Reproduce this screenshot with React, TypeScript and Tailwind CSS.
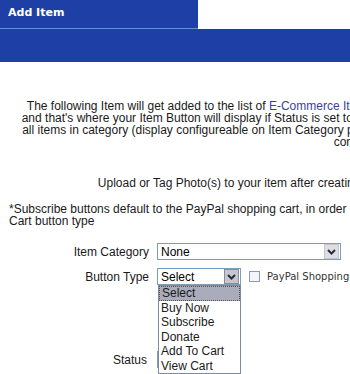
import * as React from 'react';

const arial = { fontFamily: '"Liberation Sans", Arial, sans-serif' };
const verdana = { fontFamily: '"DejaVu Sans", Verdana, sans-serif' };

const buttonTypes = ['Select', 'Buy Now', 'Subscribe', 'Donate', 'Add To Cart', 'View Cart'];

const Arrow: React.FC<{ open?: boolean }> = ({ open }) => (
  <div
    className={`flex items-center justify-center w-[15px] h-[15px] border ${
      open ? 'bg-[#c4c6d0] border-[#8a8e9c]' : 'bg-[#dcdee6] border-[#c2c6d4]'
    }`}
  >
    <svg width="9" height="6" viewBox="0 0 9 6">
      <path d="M1 1 L4.5 4.5 L8 1" fill="none" stroke="#2a2a3a" strokeWidth="2" />
    </svg>
  </div>
);

const FakeSelect: React.FC<{ value: string; width: string; open?: boolean }> = ({ value, width, open }) => (
  <div className={`flex items-center justify-between h-[17px] border border-[#7f9db9] bg-white pl-[3px] pr-px shrink-0 ${width}`}>
    <span className="text-[12px] leading-none text-black">{value}</span>
    <Arrow open={open} />
  </div>
);

const App: React.FC = () => {
  return (
    <div className="w-[350px] h-[374px] overflow-hidden bg-white relative" style={arial}>
      {/* Header */}
      <div className="flex h-[29px]">
        <div className="w-[198px] bg-[#1d3fa6] border-b border-[#5b97dc] flex items-center pl-2 pb-px">
          <span className="text-white font-bold text-[11px]" style={verdana}>Add Item</span>
        </div>
        <div className="flex-1 bg-white" />
      </div>
      <div className="h-[33px] bg-[#1d3fa6]" />

      {/* Intro text */}
      <div className="w-[736px] text-center text-[12px] leading-[12px] text-[#1a1a1a] whitespace-nowrap mt-[38px]">
        <div>
          The following Item will get added to the list of{' '}
          <span className="text-[#3a40a8]">E-Commerce Items</span> shown in the Item Category you choose below, so that it will be
        </div>
        <div>and that's where your Item Button will display if Status is set to Active. Items display with the full list of the other items in a category</div>
        <div>all items in category (display configureable on Item Category page, under the Display Settings tab of the item category settings tab</div>
        <div>configuration</div>
      </div>

      <div className="w-[736px] text-center text-[12px] leading-[12px] text-[#1a1a1a] whitespace-nowrap mt-[29px]">
        Upload or Tag Photo(s) to your item after creating it, from the Photos tab on the Item's detail page too.
      </div>

      <div className="pl-[9px] text-[12px] leading-[12px] text-[#1a1a1a] whitespace-nowrap mt-[14px]">
        <div>*Subscribe buttons default to the PayPal shopping cart, in order to use Buy Now select the PayPal Shopping</div>
        <div>Cart button type</div>
      </div>

      {/* Form */}
      <div className="mt-[16px] flex flex-col text-[12px] text-[#1a1a1a]">
        <div className="flex items-center h-[17px]">
          <div className="w-[150px] shrink-0 text-right pr-px">Item Category</div>
          <div className="ml-[7px]">
            <FakeSelect value="None" width="w-[184px]" />
          </div>
        </div>

        <div className="flex items-start mt-[8px] h-[83px]">
          <div className="w-[150px] shrink-0 text-right pr-px h-[17px] flex items-center justify-end">Button Type</div>
          <div className="ml-[7px] relative shrink-0 z-10">
            <FakeSelect value="Select" width="w-[84px]" open />
            <div className="absolute left-px top-[17px] w-[83px] border border-[#7f8a9c] bg-white">
              {buttonTypes.map((t, i) => (
                <div
                  key={t}
                  className={`h-[14.5px] flex items-center pl-[2px] leading-none ${
                    i === 0 ? 'bg-[#aaacbc] border border-dotted border-[#555]' : ''
                  }`}
                >
                  {t}
                </div>
              ))}
            </div>
          </div>
          <div className="ml-[8px] mt-px flex items-center gap-[7px] shrink-0 whitespace-nowrap">
            <div className="w-[11px] h-[11px] border border-[#8e9ab0] bg-[#f4f5f8]" />
            <span className="text-[10px] text-[#333]" style={verdana}>PayPal Shopping Cart</span>
          </div>
        </div>

        <div className="flex items-center h-[17px]">
          <div className="w-[148px] shrink-0 text-right pr-px">Status</div>
          <div className="ml-[9px]">
            <FakeSelect value="Active" width="w-[84px]" />
          </div>
        </div>
      </div>
    </div>
  );
};

export default App;
